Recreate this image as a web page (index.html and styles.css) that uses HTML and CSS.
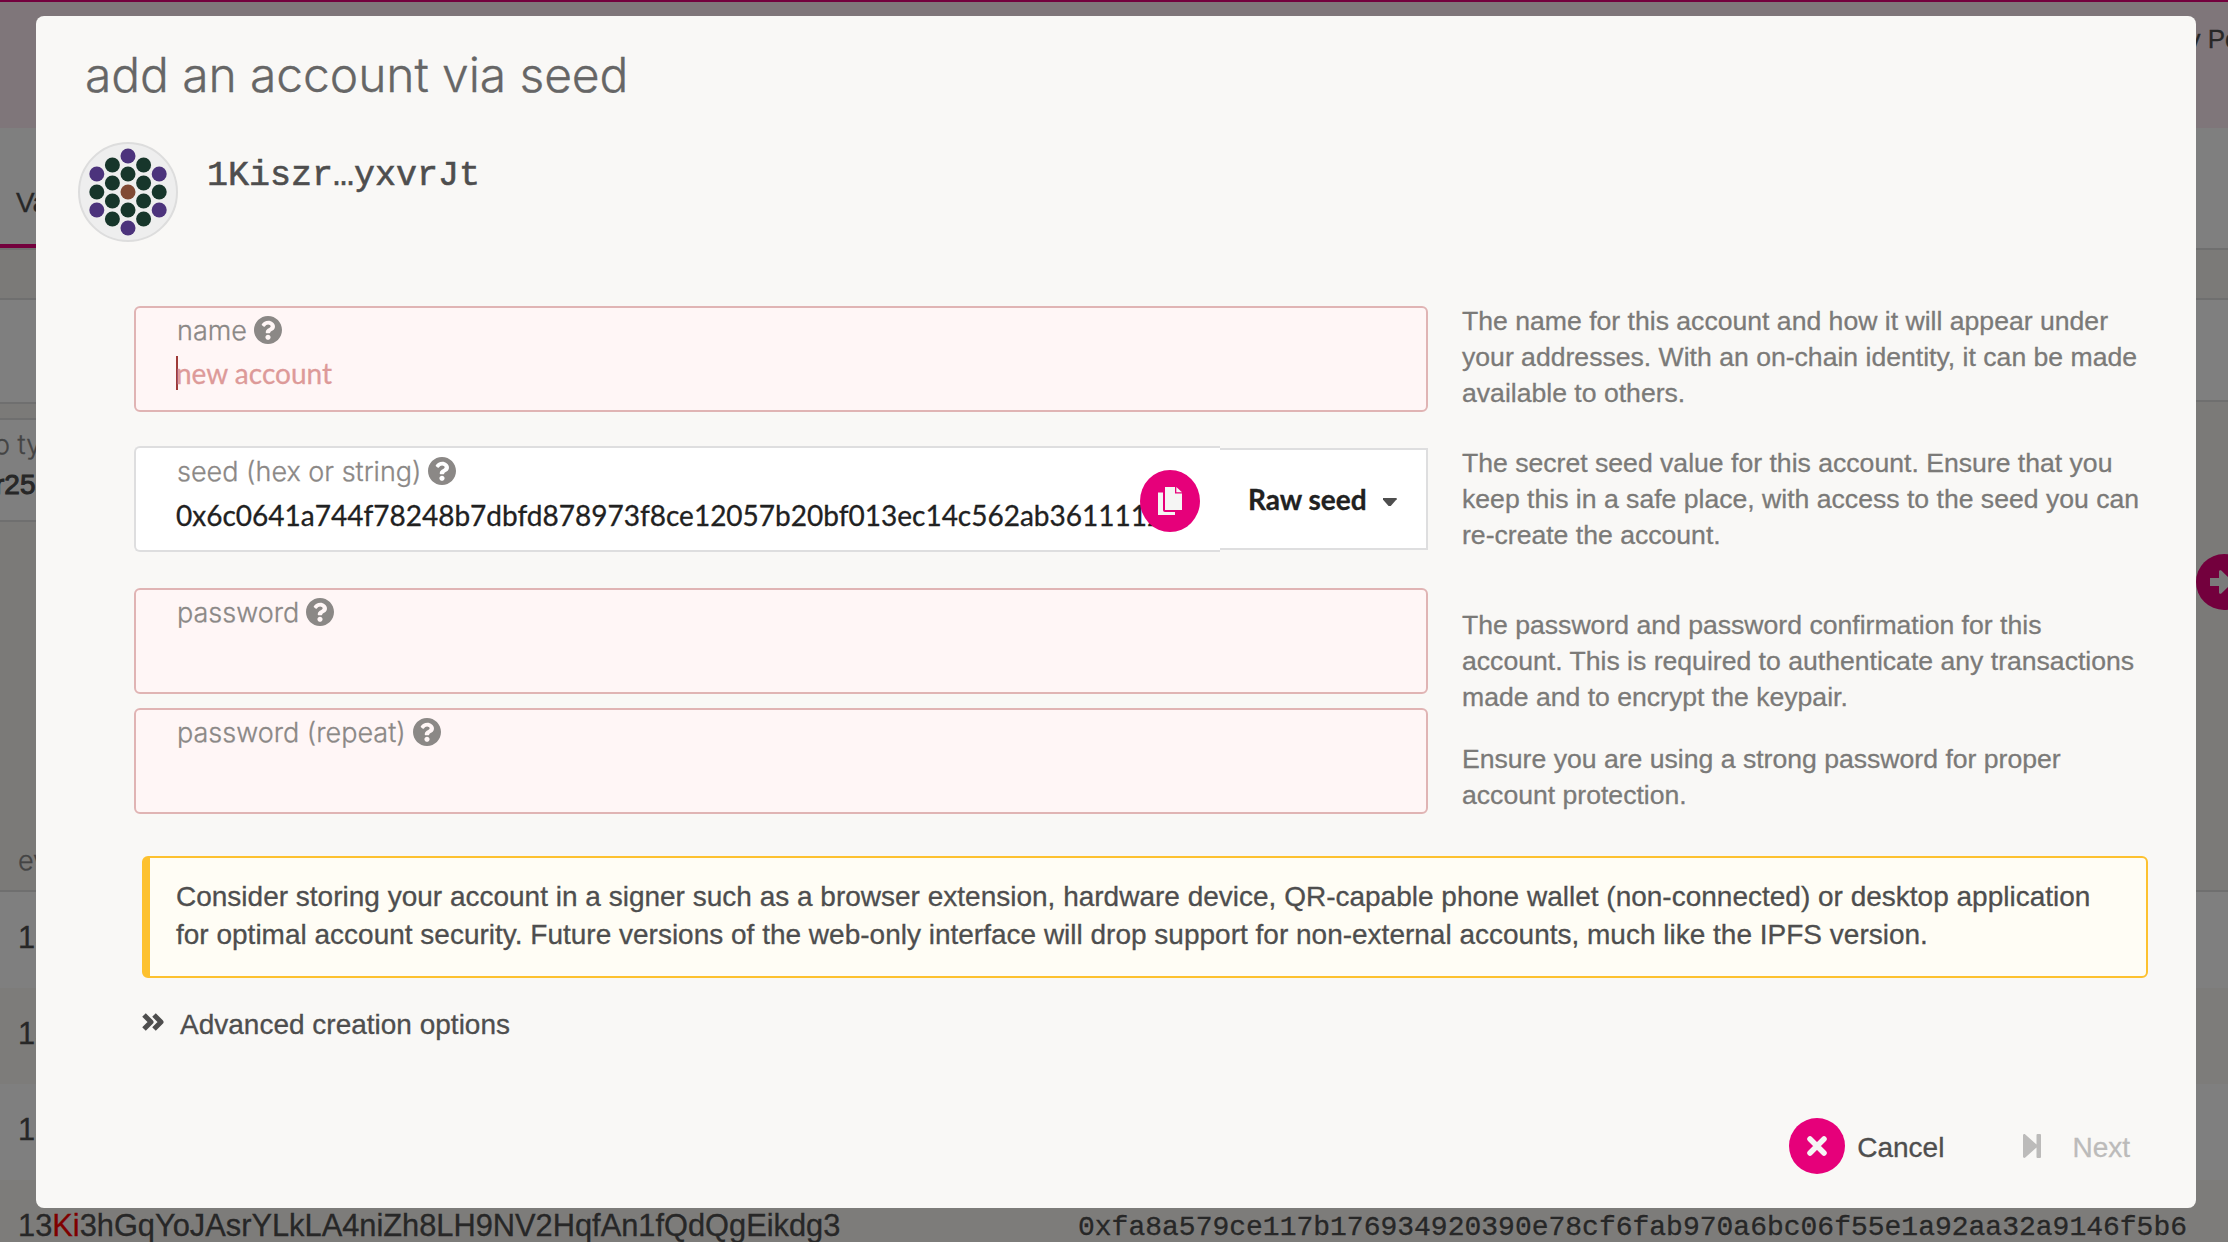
FILE: index.html
```html
<!DOCTYPE html>
<html lang="en">
<head>
<meta charset="utf-8">
<title>Accounts</title>
<link rel="stylesheet" href="styles.css">
</head>
<body>
<svg class="defs" aria-hidden="true">
  <symbol id="help" viewBox="8 8 496 496"><path d="M504 256c0 137-111 248-248 248S8 393 8 256C8 119.100 119 8 256 8s248 111.100 248 248zM262.700 90c-54.500 0-89.300 23-116.500 63.800-3.500 5.300-2.400 12.400 2.700 16.300l34.700 26.300c5.200 3.900 12.600 3 16.700-2.100 17.900-22.700 30.100-35.800 57.300-35.800 20.400 0 45.700 13.100 45.700 33 0 15-12.400 22.700-32.500 34C247.100 238.500 216 254.900 216 296v4c0 6.600 5.400 12 12 12h56c6.600 0 12-5.400 12-12v-1.300c0-28.500 83.200-29.600 83.200-106.700 0-58-60.200-102-116.500-102zM256 338c-25.400 0-46 20.600-46 46s20.600 46 46 46 46-20.600 46-46-20.600-46-46-46z"/></symbol>
</svg>

<div class="page">
  <header class="top"><span class="policy">Parity Polkadot</span></header>
  <nav class="tabs"><span class="tab">Vanity generator</span></nav>
  <section class="filters">
    <div class="filter-left">
      <div class="box box-search"></div>
      <div class="box box-type"><span class="type-label">o type</span><span class="type-value">r25519</span></div>
    </div>
    <div class="filter-right">
      <div class="box box-case"></div>
      <span class="round"><svg viewBox="0 0 28 24"><path d="M0 8h9V1.500c0-1.200 1.500-1.700 2.300-.9L22 11c.6.600.6 1.400 0 2L11.300 23.400c-.8.800-2.300.3-2.300-.9V16H0zM19 1h7v22h-7v-3h4V4h-4z"/></svg></span>
    </div>
  </section>
  <div class="thead">evaluated</div>
  <div class="row">13<b>Ki</b></div>
  <div class="row">13<b>Ki</b></div>
  <div class="row">13<b>Ki</b></div>
  <div class="row last"><span>13<b>Ki</b>3hGqYoJAsrYLkLA4niZh8LH9NV2HqfAn1fQdQgEikdg3</span><span class="hash">0xfa8a579ce117b176934920390e78cf6fab970a6bc06f55e1a92aa32a9146f5b6</span></div>
</div>

<div class="overlay">
  <main class="modal">
    <h1>add an account via seed</h1>
    <div class="account">
      <svg class="avatar" viewBox="-50 -50 100 100">
        <circle r="49" fill="#eee" stroke="#ddd" stroke-width="2"/>
        <g fill="#4c337c"><circle cy="-36" r="7.500"/><circle cy="36" r="7.500"/><circle cx="-31.200" cy="-18" r="7.500"/><circle cx="31.200" cy="-18" r="7.500"/><circle cx="-31.200" cy="18" r="7.500"/><circle cx="31.200" cy="18" r="7.500"/></g>
        <g fill="#17362b"><circle cx="-15.600" cy="-27" r="7.500"/><circle cx="15.600" cy="-27" r="7.500"/><circle cy="-18" r="7.500"/><circle cx="-15.600" cy="-9" r="7.500"/><circle cx="15.600" cy="-9" r="7.500"/><circle cx="-31.200" r="7.500"/><circle cx="31.200" r="7.500"/><circle cx="-15.600" cy="9" r="7.500"/><circle cx="15.600" cy="9" r="7.500"/><circle cy="18" r="7.500"/><circle cx="-15.600" cy="27" r="7.500"/><circle cx="15.600" cy="27" r="7.500"/></g>
        <circle r="7.500" fill="#814a35"/>
      </svg>
      <span class="address">1Kiszr…yxvrJt</span>
    </div>

    <div class="form">
      <div class="line name">
        <div class="fields"><div class="field error"><label>name<svg class="help"><use href="#help"/></svg></label><div class="value placeholder"><i class="caret"></i>new account</div></div></div>
        <div class="hint"><p>The name for this account and how it will appear under<br>your addresses. With an on-chain identity, it can be made<br>available to others.</p></div>
      </div>
      <div class="line seed">
        <div class="fields seed-fields">
          <div class="field"><label>seed (hex or string)<svg class="help"><use href="#help"/></svg></label><div class="value">0x6c0641a744f78248b7dbfd878973f8ce12057b20bf013ec14c562ab3611112f1</div>
            <span class="copy"><svg viewBox="0 0 24 28"><path d="M0 5.500h5V23c0 1.200.8 2 2 2h10v3H0z"/><path d="M7 0h10v6.500h7V23H7z"/><path d="M18.300 0 24 5.300h-5.700z"/></svg></span>
          </div>
          <div class="select">Raw seed<i class="tri"></i></div>
        </div>
        <div class="hint"><p>The secret seed value for this account. Ensure that you<br>keep this in a safe place, with access to the seed you can<br>re-create the account.</p></div>
      </div>
      <div class="line pass">
        <div class="fields">
          <div class="field error"><label>password<svg class="help"><use href="#help"/></svg></label></div>
          <div class="field error"><label>password (repeat)<svg class="help"><use href="#help"/></svg></label></div>
        </div>
        <div class="hint"><p>The password and password confirmation for this<br>account. This is required to authenticate any transactions<br>made and to encrypt the keypair.</p><p>Ensure you are using a strong password for proper<br>account protection.</p></div>
      </div>
    </div>

    <div class="warning">Consider storing your account in a signer such as a browser extension, hardware device, QR-capable phone wallet (non-connected) or desktop application<br>for optimal account security. Future versions of the web-only interface will drop support for non-external accounts, much like the IPFS version.</div>
    <div class="advanced"><svg viewBox="0 0 22 18"><path d="M2 2 9 9l-7 7M12 2l7 7-7 7"/></svg>Advanced creation options</div>
    <footer class="actions">
      <span class="cancel"><i class="x"><svg viewBox="0 0 20 20"><path d="M3 3l14 14M17 3 3 17"/></svg></i><span class="caption">Cancel</span></span>
      <span class="next"><svg viewBox="0 0 18 24"><path d="M0 1.500C0 .2 1.300-.4 2.300.5L13.500 10.500V1q0-1 1-1H17q1 0 1 1v22q0 1-1 1h-2.500q-1 0-1-1v-9.500L2.300 23.500C1.300 24.400 0 23.800 0 22.500z"/></svg><span class="caption">Next</span></span>
    </footer>
  </main>
</div>
</body>
</html>
```
FILE: styles.css
```css
* { box-sizing: border-box; }
body { margin: 0; width: 2228px; height: 1242px; overflow: hidden; position: relative; font: 28px/28px "Liberation Sans", Arial, sans-serif; color: #4e4e4e; -webkit-text-stroke: .3px; }
svg { display: block; fill: currentColor; flex: none; }
p { margin: 0; }
.defs { position: absolute; width: 0; height: 0; }

/* page behind the dialog */
.page { height: 1242px; background: #f6f4f0; overflow: hidden; white-space: nowrap; }
.top { height: 128px; border-top: 2px solid #e6007a; background: #ffecf4; display: flex; justify-content: flex-end; padding: 23px 0 0; font-size: 26px; }
.policy { width: 94px; }
.tabs { height: 122px; background: #fff; border-bottom: 2px solid #dededf; display: flex; }
.tab { height: 120px; border-bottom: 4px solid #e6007a; padding: 61px 0 0 16px; width: 300px; }
.filters { display: flex; justify-content: space-between; height: 580px; padding-top: 48px; }
.box { background: #fff; border: 2px solid #dededf; border-left: 0; border-right: 0; }
.filter-left { width: 1000px; }
.box-search { height: 106px; margin-bottom: 14px; }
.box-type { height: 104px; display: flex; flex-direction: column; align-items: flex-start; gap: 12px; padding-top: 11px; margin-left: -6px; }
.type-label { color: #888; font-family: Inter, sans-serif; font-size: 27px; font-weight: 300; }
.type-value { color: #4e4e4e; margin-left: 1px; -webkit-text-stroke: 1px; }
.filter-right { width: 1000px; }
.box-case { height: 104px; }
.round { width: 56px; height: 56px; border-radius: 50%; background: #e6007a; margin: 152px -24px 0 auto; display: flex; align-items: center; justify-content: center; color: #f5f5f4; }
.round svg { width: 28px; height: 24px; }
.thead { height: 62px; border-bottom: 2px solid #dededf; padding: 17px 18px 0; font-family: Inter, sans-serif; font-size: 27px; font-weight: 300; color: #888; }
.row { height: 96px; background: #fff; padding: 32px 18px 0; font-size: 30.8px; }
.row:nth-of-type(odd) { background: #faf8f4; }
.row b { color: #f00; font-weight: 400; }
.last { display: flex; justify-content: space-between; padding-right: 41px; }
.hash { font-family: "Liberation Mono", monospace; font-size: 28px; padding-top: 2px; }

/* dialog */
.overlay { position: absolute; inset: 0; background: rgba(0,0,0,.5); padding: 16px 32px 34px 36px; }
.modal { height: 1192px; border-radius: 8px; background: #f9f8f6; padding: 32px 48px 34px 42px; display: flex; flex-direction: column; }
h1 { margin: 0 0 0 7px; height: 94px; font: 300 48px/54px Inter, sans-serif; letter-spacing: -.1px; color: #666; }
.account { display: flex; gap: 29px; height: 100px; }
.avatar { width: 100px; height: 100px; }
.address { font: 35px/40px "Liberation Mono", monospace; padding-top: 14px; -webkit-text-stroke: .6px; }
.form { margin-top: 64px; padding-left: 56px; }
.line { display: grid; grid-template: 106px / 1294px 1fr; column-gap: 34px; height: 106px; }
.seed { margin-top: 34px; }
.pass { margin-top: 36px; height: 226px; grid-template-rows: 226px; }
.fields { display: flex; flex-direction: column; gap: 14px; }
.seed-fields { flex-direction: row; gap: 0; align-items: center; }
.field { position: relative; height: 106px; border: 2px solid #dededf; border-radius: 6px; background: #fff; padding: 8px 0 0 40px; white-space: nowrap; }
.error { background: #fff6f6; border-color: #e0b4b4; }
.seed-fields .field { width: 1086px; border-right: 0; border-radius: 6px 0 0 6px; }
label { display: flex; align-items: center; gap: 7px; height: 28px; padding: 1px 0 0 1px; font-family: Inter, sans-serif; font-size: 27px; font-weight: 300; color: #8b8886; }
.help { width: 28px; height: 28px; margin-top: -1px; }
.value { font-family: Lato, sans-serif; color: #212121; height: 34px; line-height: 34px; margin-top: 12px; display: flex; }
.seed-fields label { padding-top: 3px; }
.seed-fields .value { margin-top: 14px; }
.placeholder { color: #dd9a99; }
.caret { width: 2px; height: 34px; margin-right: -2px; background: #9f3a38; }
.copy { position: absolute; left: 1004px; top: 22px; width: 60px; height: 62px; border-radius: 50%; background: #e6007a; color: #f5f5f4; display: flex; align-items: center; justify-content: center; }
.copy svg { width: 24px; height: 28px; }
.select { width: 208px; height: 102px; background: #fff; border: 2px solid #dededf; border-left: 0; display: flex; align-items: center; padding-left: 28px; gap: 16px; font: 700 28px/34px Lato, sans-serif; color: #212121; }
.tri { width: 14px; height: 8px; margin-top: 6px; background: #4e4e4e; clip-path: polygon(0 0, 100% 0, 100% 15%, 58% 100%, 42% 100%, 0 15%); }
.hint { font-size: 26.6px; line-height: 36px; color: #7b7a78; white-space: nowrap; margin-top: -3px; }
.hint p + p { margin-top: 26px; }
.seed .hint { margin-top: -1px; }
.pass .hint { margin-top: 19px; }
.warning { margin: 42px 0 0 64px; height: 122px; border: 2px solid #fdc12f; border-left-width: 8px; border-radius: 6px; background: #fffdf5; padding: 20px 0 0 26px; line-height: 38px; white-space: nowrap; }
.advanced { margin: 33px 0 0 64px; display: flex; align-items: center; gap: 16px; }
.advanced svg { width: 22px; height: 18px; margin-top: -6px; fill: none; stroke: currentColor; stroke-width: 5; stroke-linejoin: round; }
.actions { margin-top: auto; display: flex; justify-content: flex-end; gap: 79px; padding-right: 18px; }
.cancel, .next { display: flex; align-items: center; gap: 12px; }
.caption { padding-top: 4px; }
.next { gap: 31px; color: #bcbbba; }
.next svg { width: 18px; height: 24px; }
.x { width: 56px; height: 56px; border-radius: 50%; background: #e6007a; color: #f5f5f4; display: flex; align-items: center; justify-content: center; }
.x svg { width: 20px; height: 20px; fill: none; stroke: currentColor; stroke-width: 5.500; stroke-linecap: round; }
```
